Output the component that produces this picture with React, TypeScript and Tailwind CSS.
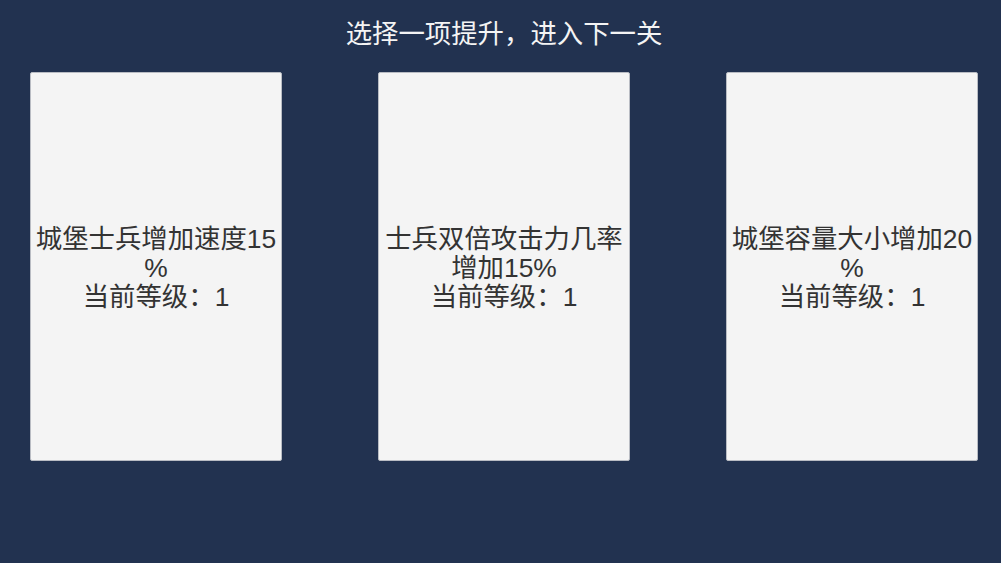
const cards = [
  { lines: ["城堡士兵增加速度15", "%"], level: 1 },
  { lines: ["士兵双倍攻击力几率", "增加15%"], level: 1 },
  { lines: ["城堡容量大小增加20", "%"], level: 1 },
];

const font = { fontFamily: '"Liberation Sans", "Noto Sans CJK SC", sans-serif' };

export default function App() {
  return (
    <div className="h-[563px] w-[1001px] bg-[#223250]" style={font}>
      <div className="flex w-[1008px] flex-col items-center">
        <h1 className="pt-[17px] text-[26.4px] leading-[34px] text-[#f4f4f4]">选择一项提升，进入下一关</h1>
        <div className="mt-[21px] flex gap-[96px]">
          {cards.map((card, i) => (
            <div
              key={i}
              className="flex h-[389px] w-[252px] flex-col items-center justify-center rounded-[2px] border border-[#b9bcc3] bg-[#f4f4f4] pt-[3px] text-center text-[26.4px] leading-[29px] text-[#333333]"
            >
              {card.lines.map((line) => (
                <div key={line} className="whitespace-nowrap">{line}</div>
              ))}
              <div>当前等级：{card.level}</div>
            </div>
          ))}
        </div>
      </div>
    </div>
  );
}
